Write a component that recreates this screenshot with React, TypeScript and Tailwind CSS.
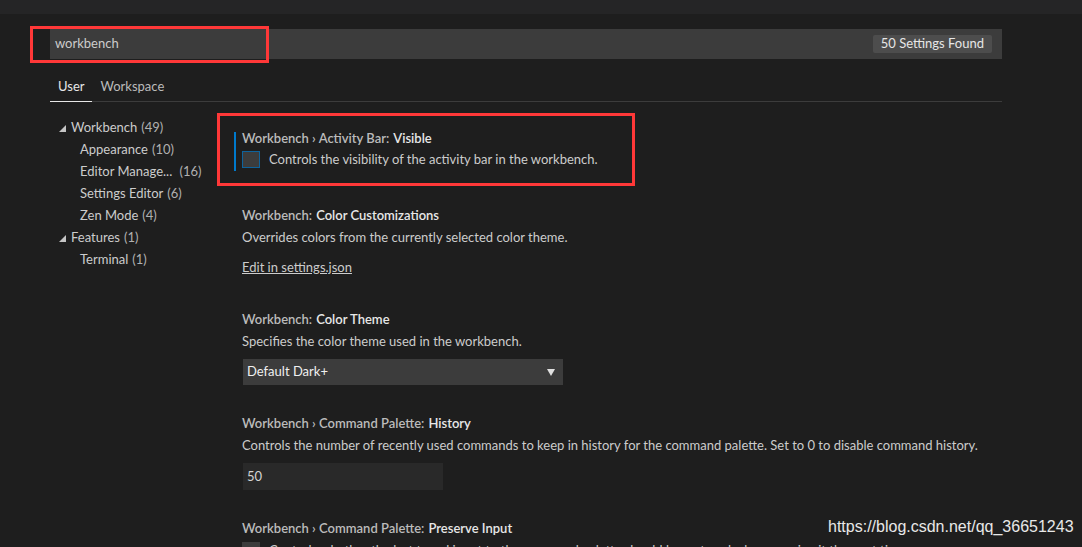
import React from 'react';

const font = { fontFamily: '"Segoe UI", Lato, "Noto Sans", sans-serif' };

function Triangle() {
  return (
    <svg width="7" height="7" viewBox="0 0 7 7" className="mr-[5px] shrink-0">
      <path d="M7 0 L7 7 L0 7 Z" fill="#c5c5c5" />
    </svg>
  );
}

function TreeItem({ label, count, child, caret }: { label: string; count: string; child?: boolean; caret?: boolean }) {
  return (
    <div className={`flex items-center h-[22px] ${child ? 'pl-[30px]' : 'pl-[9px]'}`}>
      {caret && <Triangle />}
      <span className="text-[#cccccc] whitespace-pre">{label}</span>
      <span className="text-[#b0b0b0] ml-[4px]">{count}</span>
    </div>
  );
}

function Title({ prefix, name, h = 'h-[22px]' }: { prefix: string; name: string; h?: string }) {
  return (
    <div className={`${h} flex items-center font-semibold text-[#bbbbbb]`}>
      <span>{prefix}</span>
      <span className="text-[#e7e7e7] ml-[4px]">{name}</span>
    </div>
  );
}

function Desc({ children }: { children: React.ReactNode }) {
  return <div className="h-[21px] flex items-center text-[#cccccc]">{children}</div>;
}

export default function App() {
  return (
    <div className="relative w-[1082px] h-[547px] overflow-hidden bg-[#1e1e1e] text-[13px]" style={font}>
      <div className="h-[14px] bg-[#252526]" />

      {/* search */}
      <div className="pl-[50px] pr-[80px] pt-[15px]">
        <div className="h-[30px] bg-[#3c3c3c] flex items-center justify-between pl-[5px] pr-[10px]">
          <span className="text-[#cccccc]">workbench</span>
          <span className="bg-[#4d4d4d] text-[#e6e6e6] px-[8px] h-[18px] flex items-center rounded-[2px]">50 Settings Found</span>
        </div>

        {/* tabs */}
        <div className="mt-[13px] flex border-b border-[#3c3c3c] h-[30px]">
          <div className="px-[8px] h-[30px] flex items-center text-[#e7e7e7] border-b border-[#e7e7e7] -mb-px">User</div>
          <div className="px-[8px] h-[30px] flex items-center text-[#bbbbbb]">Workspace</div>
        </div>

        <div className="flex mt-[15px]">
          {/* tree */}
          <div className="w-[184px] shrink-0">
            <TreeItem label="Workbench" count="(49)" caret />
            <TreeItem label="Appearance" count="(10)" child />
            <TreeItem label="Editor Manage... " count="(16)" child />
            <TreeItem label="Settings Editor" count="(6)" child />
            <TreeItem label="Zen Mode" count="(4)" child />
            <TreeItem label="Features" count="(1)" caret />
            <TreeItem label="Terminal" count="(1)" child />
          </div>

          {/* settings */}
          <div className="flex-1 pt-[15px]">
            <div className="border-l-2 border-[#007acc] pl-[6px] pb-[1px]">
              <Title prefix="Workbench › Activity Bar:" name="Visible" h="h-[14px]" />
              <div className="mt-[3px] h-[21px] flex items-center text-[#cccccc]">
                <div className="w-[18px] h-[17px] bg-[#3c3c3c] border border-[#0e639c] mr-[9px]" />
                Controls the visibility of the activity bar in the workbench.
              </div>
            </div>

            <div className="pl-[8px] mt-[34px]">
              <Title prefix="Workbench:" name="Color Customizations" />
              <Desc>Overrides colors from the currently selected color theme.</Desc>
              <div className="mt-[9px] h-[21px] flex items-center text-[#cccccc] underline">Edit in settings.json</div>
            </div>

            <div className="pl-[8px] mt-[31px]">
              <Title prefix="Workbench:" name="Color Theme" />
              <Desc>Specifies the color theme used in the workbench.</Desc>
              <div className="mt-[7px] ml-px w-[320px] h-[26px] bg-[#3c3c3c] flex items-center justify-between pl-[4px] pr-[8px] text-[#f0f0f0]">
                <span>Default Dark+</span>
                <svg width="8" height="7" viewBox="0 0 8 7">
                  <path d="M0 0 L8 0 L4 7 Z" fill="#e0e0e0" />
                </svg>
              </div>
            </div>

            <div className="pl-[8px] mt-[28px]">
              <Title prefix="Workbench › Command Palette:" name="History" />
              <Desc>Controls the number of recently used commands to keep in history for the command palette. Set to 0 to disable command history.</Desc>
              <div className="mt-[7px] ml-px w-[200px] h-[27px] bg-[#292929] flex items-center pl-[4px] text-[#d4d4d4]">50</div>
            </div>

            <div className="pl-[8px] mt-[28px]">
              <Title prefix="Workbench › Command Palette:" name="Preserve Input" />
              <div className="h-[21px] flex items-center text-[#cccccc] whitespace-nowrap">
                <div className="w-[18px] h-[17px] bg-[#3c3c3c] mr-[9px] shrink-0" />
                Controls whether the last typed input to the command palette should be restored when opening it the next time.
              </div>
            </div>
          </div>
        </div>
      </div>

      {/* annotation boxes */}
      <div className="absolute left-[30px] top-[26px] w-[239px] h-[37px] border-[3px] border-[#ff3838]" />
      <div className="absolute left-[33px] top-[29px] w-[17px] h-[30px] bg-[#1e1e1e]" />
      <div className="absolute left-[217px] top-[113px] w-[418px] h-[73px] border-[3px] border-[#ff3838]" />

      {/* watermark */}
      <div
        className="absolute left-[828px] top-[519px] text-[16px] leading-none text-[#e8e8e8]"
        style={{ fontFamily: '"Liberation Sans", Arial, sans-serif' }}
      >
        https://blog.csdn.net/qq_36651243
      </div>
    </div>
  );
}
